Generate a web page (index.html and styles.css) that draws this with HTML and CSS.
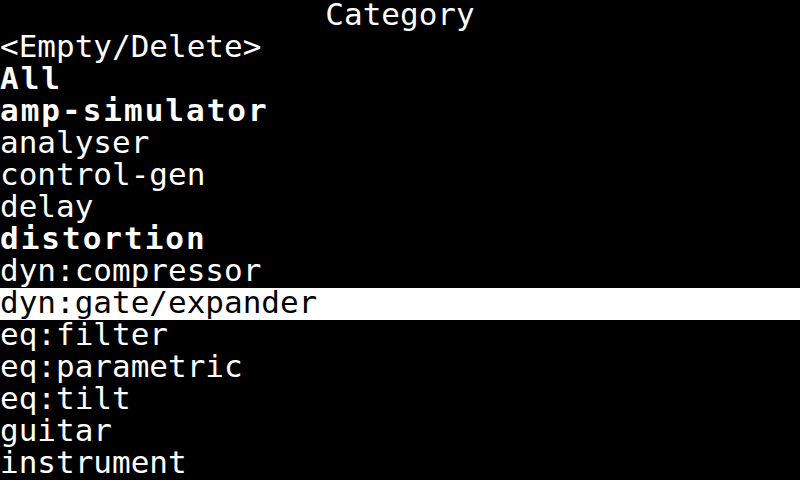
FILE: index.html
```html
<!DOCTYPE html>
<html>
<head>
<meta charset="utf-8">
<link rel="stylesheet" href="styles.css">
</head>
<body>
<div class="screen">
  <div class="title">Category</div>
  <ul class="list">
    <li class="item">&lt;Empty/Delete&gt;</li>
    <li class="item bold">All</li>
    <li class="item bold">amp-simulator</li>
    <li class="item">analyser</li>
    <li class="item">control-gen</li>
    <li class="item">delay</li>
    <li class="item bold">distortion</li>
    <li class="item">dyn:compressor</li>
    <li class="item selected">dyn:gate/expander</li>
    <li class="item">eq:filter</li>
    <li class="item">eq:parametric</li>
    <li class="item">eq:tilt</li>
    <li class="item">guitar</li>
    <li class="item">instrument</li>
  </ul>
</div>
</body>
</html>
```
FILE: styles.css
```css
html, body {
  margin: 0;
  padding: 0;
  background: #000;
}
.screen {
  width: 800px;
  height: 480px;
  overflow: hidden;
  background: #000;
  color: #fff;
  font-family: "DejaVu Sans Mono", monospace;
  font-size: 31px;
  line-height: 28px;
}
.title {
  height: 32px;
  text-align: center;
  white-space: pre;
}
.list {
  list-style: none;
  margin: 0;
  padding: 0;
}
.item {
  height: 32px;
  white-space: pre;
}
.bold {
  font-weight: bold;
  letter-spacing: 2px;
}
.selected {
  background: #fff;
  color: #000;
}
```
